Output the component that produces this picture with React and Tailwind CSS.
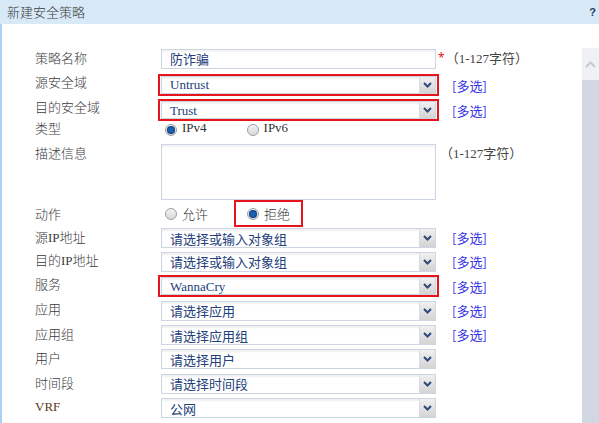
import React from "react";

const FONT = { fontFamily: '"Liberation Serif", "Noto Sans CJK SC", serif' };
const CJK = { fontFamily: '"Noto Sans CJK SC", "Liberation Sans", sans-serif' };

function Chevron() {
  return (
    <svg width="9" height="6" viewBox="0 0 9 6">
      <path d="M1 1 L4.5 4.5 L8 1" stroke="#2c4a7c" strokeWidth="2" fill="none" />
    </svg>
  );
}

function Select({ value, serif, h = "h-[20px]" }) {
  return (
    <div className={`flex w-[275px] ${h} border border-[#cdd5e2] bg-white shadow-[inset_0_2px_2px_rgba(0,0,0,0.06)]`}>
      <div
        className="flex-1 flex items-center pl-[8px] text-[13px] text-[#23407a] leading-none"
        style={serif ? FONT : CJK}
      >
        {value}
      </div>
      <div className="w-[16px] flex items-center justify-center bg-gradient-to-b from-[#f0f0f0] to-[#d4d4d4] border-l border-[#d8dce4]">
        <Chevron />
      </div>
    </div>
  );
}

function Red({ children, className = "" }) {
  return <div className={`border-2 border-[#e8141c] ${className}`}>{children}</div>;
}

function Label({ children, className = "-mt-[3px]" }) {
  return (
    <div className={`w-[159px] shrink-0 pl-[33px] text-[13px] text-[#3a3a3a] font-light ${className}`} style={CJK}>
      {children}
    </div>
  );
}

function Multi() {
  return (
    <span className="ml-[16px] text-[13px] text-[#3535e8]" style={CJK}>
      [多选]
    </span>
  );
}

function Radio({ checked }) {
  return (
    <span className="inline-flex w-[12px] h-[12px] rounded-full border border-[#9aa0a8] bg-gradient-to-b from-[#f4f4f4] to-[#d8d8d8] items-center justify-center">
      {checked && <span className="w-[6px] h-[6px] rounded-full bg-[#1a62b0] shadow-[0_0_0_1px_#0c3d78]" />}
    </span>
  );
}

function Row({ h, children, className = "items-center" }) {
  return <div className={`flex ${className} ${h}`}>{children}</div>;
}

export default function App() {
  return (
    <div className="w-[599px] h-[423px] overflow-hidden bg-white flex flex-col">
      <div className="h-[24px] shrink-0 bg-[#d8eaf8] flex items-center justify-between pl-[7px] pr-[3px]">
        <span className="text-[13px] text-[#3a3a3a] font-light" style={CJK}>新建安全策略</span>
        <span className="text-[11px] font-bold text-[#1f3d66]" style={{ fontFamily: '"Liberation Sans", sans-serif' }}>?</span>
      </div>
      <div className="flex-1 flex border-l-2 border-[#a9d1f3] min-h-0">
        <div className="flex-1 pt-[23px]">
          <Row h="h-[24px]">
            <Label className="-mt-[2px]">策略名称</Label>
            <div className="w-[275px] h-[20px] border border-[#cdd5e2] flex items-center pl-[8px] text-[13px] text-[#23407a] shadow-[inset_0_2px_2px_rgba(0,0,0,0.05)]" style={CJK}>
              防诈骗
            </div>
            <span className="text-[#e8141c] text-[12px] ml-[2px] self-start mt-[2px]">*</span>
            <span className="text-[13px] text-[#444] ml-[1px]" style={FONT}>（1-127字符）</span>
          </Row>
          <Row h="h-[27px]">
            <Label className="-mt-[5px]">源安全域</Label>
            <Red className="-ml-[3px] px-[1px]"><Select value="Untrust" serif h="h-[18px]" /></Red>
            <span className="ml-[-3px]"><Multi /></span>
          </Row>
          <Row h="h-[24px]">
            <Label className="-mt-[7px]">目的安全域</Label>
            <Red className="-ml-[3px] px-[1px]"><Select value="Trust" serif h="h-[18px]" /></Red>
            <span className="ml-[-3px]"><Multi /></span>
          </Row>
          <Row h="h-[16px]">
            <Label className="-mt-[4px]">类型</Label>
            <div className="flex items-center ml-[4px]">
              <Radio checked />
              <span className="ml-[5px] text-[13px] text-[#333] -mt-[5px]" style={FONT}>IPv4</span>
            </div>
            <div className="flex items-center ml-[40px]">
              <Radio />
              <span className="ml-[5px] text-[13px] text-[#333] -mt-[5px]" style={FONT}>IPv6</span>
            </div>
          </Row>
          <Row h="h-[62px]" className="items-start">
            <Label className="pt-[5px]">描述信息</Label>
            <div className="mt-[6px] w-[275px] h-[56px] border border-[#cdd5e2] shadow-[inset_0_2px_2px_rgba(0,0,0,0.05)]" />
            <span className="mt-[6px] ml-[4px] text-[13px] text-[#444]" style={FONT}>（1-127字符）</span>
          </Row>
          <Row h="h-[27px]">
            <Label className="mt-0">动作</Label>
            <div className="flex items-center ml-[4px]">
              <Radio />
              <span className="ml-[5px] text-[13px] text-[#333] font-light" style={CJK}>允许</span>
            </div>
            <Red className="ml-[26px] h-[27px] w-[69px] flex items-center pl-[11px]">
              <Radio checked />
              <span className="ml-[5px] text-[13px] text-[#333] font-light" style={CJK}>拒绝</span>
            </Red>
          </Row>
          <Row h="h-[22px]">
            <Label className="-mt-[2px]">源<span style={FONT}>IP</span>地址</Label>
            <Select value="请选择或输入对象组" />
            <Multi />
          </Row>
          <Row h="h-[25px]">
            <Label className="-mt-[2px]">目的<span style={FONT}>IP</span>地址</Label>
            <Select value="请选择或输入对象组" />
            <Multi />
          </Row>
          <Row h="h-[24px]">
            <Label className="-mt-[4px]">服务</Label>
            <Red className="-ml-[3px] px-[1px]"><Select value="WannaCry" serif h="h-[18px]" /></Red>
            <span className="ml-[-3px]"><Multi /></span>
          </Row>
          <Row h="h-[25px]">
            <Label>应用</Label>
            <Select value="请选择应用" />
            <Multi />
          </Row>
          <Row h="h-[24px]">
            <Label>应用组</Label>
            <Select value="请选择应用组" />
            <Multi />
          </Row>
          <Row h="h-[24px]">
            <Label>用户</Label>
            <Select value="请选择用户" />
          </Row>
          <Row h="h-[25px]">
            <Label className="-mt-[2px]">时间段</Label>
            <Select value="请选择时间段" />
          </Row>
          <Row h="h-[24px]">
            <Label className="-mt-[3px]"><span className="text-[#5c3a1c] font-normal" style={FONT}>VRF</span></Label>
            <Select value="公网" />
          </Row>
          <Row h="h-[24px]">
            <Label>安全策略组</Label>
          </Row>
        </div>
        <div className="w-[17px] shrink-0 flex flex-col pt-[24px]">
          <div className="h-[32px] bg-[#f0f1f4] flex items-center justify-center">
            <svg width="11" height="7" viewBox="0 0 11 7">
              <path d="M1 6 L5.5 1.5 L10 6" stroke="#c4c9d4" strokeWidth="2" fill="none" />
            </svg>
          </div>
          <div className="flex-1 bg-[#d3d7e2]" />
        </div>
      </div>
    </div>
  );
}
